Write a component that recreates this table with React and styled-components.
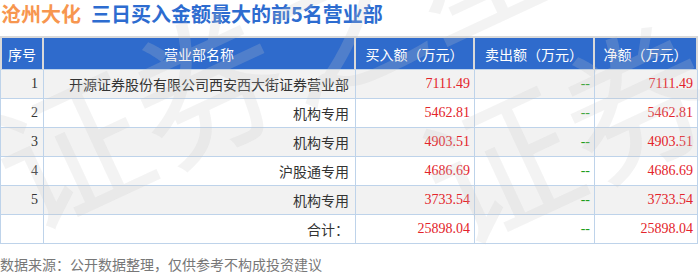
import React from "react";
import styled, { createGlobalStyle } from "styled-components";

const Global = createGlobalStyle`
  html, body { margin: 0; padding: 0; background: #fff; }
  body { font-family: "Noto Sans CJK SC", "Noto Sans", sans-serif; }
`;

const Page = styled.div`
  position: relative;
  width: 700px;
  height: 274px;
  overflow: hidden;
  background: #fff;
`;

const Title = styled.div`
  display: flex;
  align-items: center;
  height: 36px;
  padding-left: 1px;
  padding-bottom: 8px;
  box-sizing: border-box;
  font-size: 20px;
  font-weight: 700;
  line-height: 28px;
  white-space: nowrap;
`;

const Stock = styled.span`
  color: #f7964f;
`;

const Heading = styled.span`
  color: #2d6cd0;
  margin-left: 10px;
`;

const Table = styled.table`
  width: 698px;
  table-layout: fixed;
  border-collapse: separate;
  border-spacing: 0;
`;

const Th = styled.th`
  height: 31px;
  padding: 0;
  background: #2f6bcc;
  color: #fff;
  font-size: 14px;
  font-weight: 400;
  text-align: center;
  border-top: 2px solid #d9d9d9;
  border-right: 2px solid #d9d9d9;
  border-bottom: 1px solid #bed3ea;
  &:first-child { border-left: 2px solid #d9d9d9; }
`;

const Tr = styled.tr`
  background: ${(p) => (p.$shade ? "#f2f2f2" : "#fff")};
`;

const Td = styled.td`
  height: 28px;
  padding: 0 ${(p) => (p.$name ? "6px" : "4px")} 0 0;
  text-align: right;
  font-family: ${(p) =>
    p.$name ? '"Noto Sans CJK SC", sans-serif' : '"Liberation Serif", "Noto Sans CJK SC", serif'};
  font-size: 14px;
  color: ${(p) => (p.$tone === "up" ? "#e3242b" : p.$tone === "flat" ? "#1e9e1e" : "#333")};
  border-right: 1px solid #bed3ea;
  border-bottom: 1px solid #bed3ea;
  white-space: nowrap;
  &:first-child { border-left: 1px solid #bed3ea; padding-right: 5px; }
`;

const Footer = styled.div`
  padding-top: 10px;
  padding-left: 0;
  font-size: 14px;
  line-height: 20px;
  color: #777;
  white-space: nowrap;
`;

const Watermark = styled.div`
  position: absolute;
  left: ${(p) => p.$x}px;
  top: ${(p) => p.$y}px;
  font-family: "Noto Sans CJK SC", sans-serif;
  font-size: 150px;
  line-height: 150px;
  font-weight: 400;
  color: rgba(200, 200, 200, 0.22);
  transform: rotate(-25deg);
  transform-origin: 0 50%;
  white-space: nowrap;
  pointer-events: none;
`;

const rows = [
  { no: "1", name: "开源证券股份有限公司西安西大街证券营业部", buy: "7111.49", net: "7111.49" },
  { no: "2", name: "机构专用", buy: "5462.81", net: "5462.81" },
  { no: "3", name: "机构专用", buy: "4903.51", net: "4903.51" },
  { no: "4", name: "沪股通专用", buy: "4686.69", net: "4686.69" },
  { no: "5", name: "机构专用", buy: "3733.54", net: "3733.54" },
];

export default function App() {
  return (
    <>
      <Global />
      <Page>
        <Title>
          <Stock>沧州大化</Stock>
          <Heading>三日买入金额最大的前5名营业部</Heading>
        </Title>
        <Table>
          <colgroup>
            <col style={{ width: 44 }} />
            <col style={{ width: 312 }} />
            <col style={{ width: 119 }} />
            <col style={{ width: 120 }} />
            <col style={{ width: 103 }} />
          </colgroup>
          <thead>
            <tr>
              <Th>序号</Th>
              <Th>营业部名称</Th>
              <Th>买入额（万元）</Th>
              <Th>卖出额（万元）</Th>
              <Th>净额（万元）</Th>
            </tr>
          </thead>
          <tbody>
            {rows.map((r, i) => (
              <Tr key={r.no} $shade={i % 2 === 0}>
                <Td>{r.no}</Td>
                <Td $name>{r.name}</Td>
                <Td $tone="up">{r.buy}</Td>
                <Td $tone="flat">--</Td>
                <Td $tone="up">{r.net}</Td>
              </Tr>
            ))}
            <Tr>
              <Td></Td>
              <Td $name>合计：</Td>
              <Td $tone="up">25898.04</Td>
              <Td $tone="flat">--</Td>
              <Td $tone="up">25898.04</Td>
            </Tr>
          </tbody>
        </Table>
        <Footer>数据来源：公开数据整理，仅供参考不构成投资建议</Footer>
        <Watermark $x={0} $y={100}>证券之星</Watermark>
        <Watermark $x={430} $y={115}>证券之星</Watermark>
      </Page>
    </>
  );
}
